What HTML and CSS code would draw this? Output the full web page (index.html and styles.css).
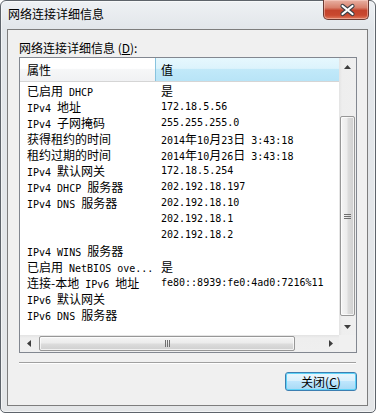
FILE: index.html
```html
<!DOCTYPE html>
<html lang="zh-CN">
<head>
    <meta charset="UTF-8">
    <meta name="viewport" content="width=device-width, initial-scale=1.0">
    <title>网络连接详细信息</title>
    <link rel="stylesheet" href="styles.css">
</head>
<body>
    <div class="window">
        <div class="titlebar">
            <span class="title">网络连接详细信息</span>
            <div class="close-btn">
                <svg width="46" height="19" viewBox="0 0 46 19">
                    <path d="M18.5 6 L28.5 14 M28.5 6 L18.5 14" stroke="#3b3f46" stroke-width="4.2" stroke-linecap="round"/>
                    <path d="M18.5 6 L28.5 14 M28.5 6 L18.5 14" stroke="#ffffff" stroke-width="2.2" stroke-linecap="round"/>
                </svg>
            </div>
        </div>

        <div class="client">
            <div class="label">网络连接详细信息 (<u>D</u>):</div>

            <div class="listbox">
                <div class="list-main">
                    <div class="header">
                        <div class="hcell">属性</div>
                        <div class="hcell active">值</div>
                    </div>
                    <div class="rows">
                        <div class="row"><div class="cell"><span class="zh">已启用</span> DHCP</div><div class="cell"><span class="zh">是</span></div></div>
                        <div class="row"><div class="cell">IPv4 <span class="zh">地址</span></div><div class="cell">172.18.5.56</div></div>
                        <div class="row"><div class="cell">IPv4 <span class="zh">子网掩码</span></div><div class="cell">255.255.255.0</div></div>
                        <div class="row"><div class="cell"><span class="zh">获得租约的时间</span></div><div class="cell">2014<span class="zh">年</span>10<span class="zh">月</span>23<span class="zh">日</span> 3:43:18</div></div>
                        <div class="row"><div class="cell"><span class="zh">租约过期的时间</span></div><div class="cell">2014<span class="zh">年</span>10<span class="zh">月</span>26<span class="zh">日</span> 3:43:18</div></div>
                        <div class="row"><div class="cell">IPv4 <span class="zh">默认网关</span></div><div class="cell">172.18.5.254</div></div>
                        <div class="row"><div class="cell">IPv4 DHCP <span class="zh">服务器</span></div><div class="cell">202.192.18.197</div></div>
                        <div class="row"><div class="cell">IPv4 DNS <span class="zh">服务器</span></div><div class="cell">202.192.18.10</div></div>
                        <div class="row"><div class="cell"></div><div class="cell">202.192.18.1</div></div>
                        <div class="row"><div class="cell"></div><div class="cell">202.192.18.2</div></div>
                        <div class="row"><div class="cell">IPv4 WINS <span class="zh">服务器</span></div><div class="cell"></div></div>
                        <div class="row"><div class="cell"><span class="zh">已启用</span> NetBIOS ove...</div><div class="cell"><span class="zh">是</span></div></div>
                        <div class="row"><div class="cell"><span class="zh">连接-本地</span> IPv6 <span class="zh">地址</span></div><div class="cell">fe80::8939:fe0:4ad0:7216%11</div></div>
                        <div class="row"><div class="cell">IPv6 <span class="zh">默认网关</span></div><div class="cell"></div></div>
                        <div class="row"><div class="cell">IPv6 DNS <span class="zh">服务器</span></div><div class="cell"></div></div>
                    </div>
                </div>

                <!-- vertical scrollbar -->
                <div class="vscroll">
                    <div class="arrow-btn">
                        <svg width="7" height="4" viewBox="0 0 7 4"><polygon points="3.5,0 7,4 0,4" fill="#3d3d3d"/></svg>
                    </div>
                    <div class="vtrack">
                        <div class="vthumb"><span class="grip-h"></span></div>
                    </div>
                    <div class="arrow-btn">
                        <svg width="7" height="4" viewBox="0 0 7 4"><polygon points="0,0 7,0 3.5,4" fill="#3d3d3d"/></svg>
                    </div>
                </div>

                <!-- horizontal scrollbar -->
                <div class="hscroll">
                    <div class="arrow-btn">
                        <svg width="4" height="7" viewBox="0 0 4 7"><polygon points="4,0 4,7 0,3.5" fill="#3d3d3d"/></svg>
                    </div>
                    <div class="htrack">
                        <div class="hthumb"><span class="grip-v"></span></div>
                    </div>
                    <div class="arrow-btn">
                        <svg width="4" height="7" viewBox="0 0 4 7"><polygon points="0,0 4,3.5 0,7" fill="#3d3d3d"/></svg>
                    </div>
                </div>
                <div class="corner"></div>
            </div>

            <div class="separator"></div>

            <div class="actions">
                <button class="btn">关闭(<u>C</u>)</button>
            </div>
        </div>
    </div>
</body>
</html>
```

FILE: styles.css
```css
/* Global Styles */
* {
    margin: 0;
    padding: 0;
    box-sizing: border-box;
}

body {
    background-color: #ffffff;
    font-family: "DejaVu Sans Mono", "Noto Sans CJK SC", monospace;
    font-size: 10px;
    color: #000;
}

.zh {
    font-family: "Noto Sans CJK SC", sans-serif;
    font-size: 12px;
}

/* Window frame */
.window {
    width: 376px;
    height: 413px;
    border: 1px solid #5e646b;
    border-radius: 6px 6px 5px 5px;
    background: linear-gradient(to bottom, #eef1f4 0, #e2e6ea 28px, #e4e6e8 100%);
    box-shadow: inset 0 0 0 1px rgba(255, 255, 255, 0.55);
    padding: 0 7px 6px 6px;
    display: flex;
    flex-direction: column;
}

.titlebar {
    height: 28px;
    display: flex;
    justify-content: space-between;
    align-items: flex-start;
    margin-right: -1px;
}

.title {
    font-family: "Noto Sans CJK SC", sans-serif;
    font-size: 12px;
    line-height: 16px;
    margin-top: 5px;
    margin-left: 1px;
}

.close-btn {
    width: 46px;
    height: 20px;
    margin-top: -1px;
    border: 1px solid #6b3a33;
    border-top: none;
    border-radius: 0 0 5px 5px;
    background: linear-gradient(to bottom, #e8b1a3 0%, #d8806c 40%, #c4432c 55%, #c9482f 80%, #e07a5e 100%);
    box-shadow: inset 0 0 0 1px rgba(255, 220, 210, 0.45);
}

.close-btn svg {
    display: block;
}

/* Client area */
.client {
    flex: 1;
    border: 1px solid #7d7d7d;
    background-color: #f0f0f0;
    padding: 9px 10px 14px 11px;
    display: flex;
    flex-direction: column;
}

.label {
    font-family: "Noto Sans CJK SC", sans-serif;
    font-size: 12px;
    line-height: 18px;
    height: 18px;
}

/* List view */
.listbox {
    width: 338px;
    height: 296px;
    border: 1px solid #828790;
    background-color: #fff;
    display: grid;
    grid-template-columns: 319px 17px;
    grid-template-rows: 277px 17px;
}

.list-main {
    overflow: hidden;
}

.header {
    height: 24px;
    display: flex;
    border-bottom: 1px solid #d5d5d5;
}

.hcell {
    width: 135px;
    padding-left: 7px;
    font-family: "Noto Sans CJK SC", sans-serif;
    font-size: 12px;
    line-height: 24px;
    background: linear-gradient(to bottom, #ffffff 0%, #ffffff 45%, #f6f7f8 50%, #f0f1f3 100%);
}

.hcell.active {
    flex: 1;
    padding-left: 5px;
    border-left: 1px solid #88c3de;
    background: linear-gradient(to bottom, #e6f8fe 0%, #dcf3fc 45%, #c1e9f9 50%, #b8e4f7 100%);
}

.rows {
    padding-top: 1px;
}

.row {
    display: flex;
    height: 16px;
    line-height: 16px;
    white-space: nowrap;
}

.cell {
    width: 135px;
    padding-left: 7px;
    overflow: hidden;
}

.cell + .cell {
    flex: 1;
    padding-left: 6px;
}

/* Scrollbars */
.vscroll {
    display: flex;
    flex-direction: column;
    background: linear-gradient(to right, #e3e3e3 0, #eeeeee 3px, #efefef 100%);
}

.hscroll {
    display: flex;
    background: linear-gradient(to bottom, #e3e3e3 0, #eeeeee 3px, #efefef 100%);
}

.arrow-btn {
    width: 17px;
    height: 17px;
    display: flex;
    align-items: center;
    justify-content: center;
    flex-shrink: 0;
}

.vtrack {
    flex: 1;
    padding: 41px 1px 0 1px;
}

.vthumb {
    height: 200px;
    border: 1px solid #979797;
    border-radius: 2px;
    background: linear-gradient(to right, #f5f5f5 0%, #ececec 45%, #dcdcdc 55%, #cfcfcf 100%);
    box-shadow: inset 0 0 0 1px rgba(255, 255, 255, 0.7);
    display: flex;
    align-items: center;
    justify-content: center;
}

.grip-h {
    width: 7px;
    height: 5px;
    border-top: 1px solid #6f6f6f;
    border-bottom: 1px solid #6f6f6f;
    position: relative;
}

.grip-h::after {
    content: "";
    display: block;
    height: 1px;
    margin-top: 1px;
    background-color: #6f6f6f;
}

.htrack {
    flex: 1;
    padding: 1px 0 1px 2px;
}

.hthumb {
    width: 256px;
    height: 100%;
    border: 1px solid #979797;
    border-radius: 2px;
    background: linear-gradient(to bottom, #f5f5f5 0%, #ececec 45%, #dcdcdc 55%, #cfcfcf 100%);
    box-shadow: inset 0 0 0 1px rgba(255, 255, 255, 0.7);
    display: flex;
    align-items: center;
    justify-content: center;
}

.grip-v {
    width: 5px;
    height: 7px;
    border-left: 1px solid #6f6f6f;
    border-right: 1px solid #6f6f6f;
}

.grip-v::after {
    content: "";
    display: block;
    width: 1px;
    height: 7px;
    margin-left: 1px;
    background-color: #6f6f6f;
}

.corner {
    background-color: #f0f0f0;
}

/* Bottom */
.separator {
    width: 337px;
    margin-top: 9px;
    border-top: 1px solid #a0a0a0;
    border-bottom: 1px solid #ffffff;
}

.actions {
    display: flex;
    justify-content: flex-end;
    margin-top: 8px;
}

.btn {
    width: 72px;
    height: 19px;
    font-family: "Noto Sans CJK SC", sans-serif;
    font-size: 12px;
    line-height: 16px;
    color: #000;
    border: 1px solid #3c7fb1;
    border-radius: 3px;
    background: linear-gradient(to bottom, #eaf6fd 0%, #d9f0fc 45%, #bee6fd 50%, #a7d9f5 100%);
    box-shadow: inset 0 0 0 1px #5fd3f8;
    cursor: pointer;
}
```
